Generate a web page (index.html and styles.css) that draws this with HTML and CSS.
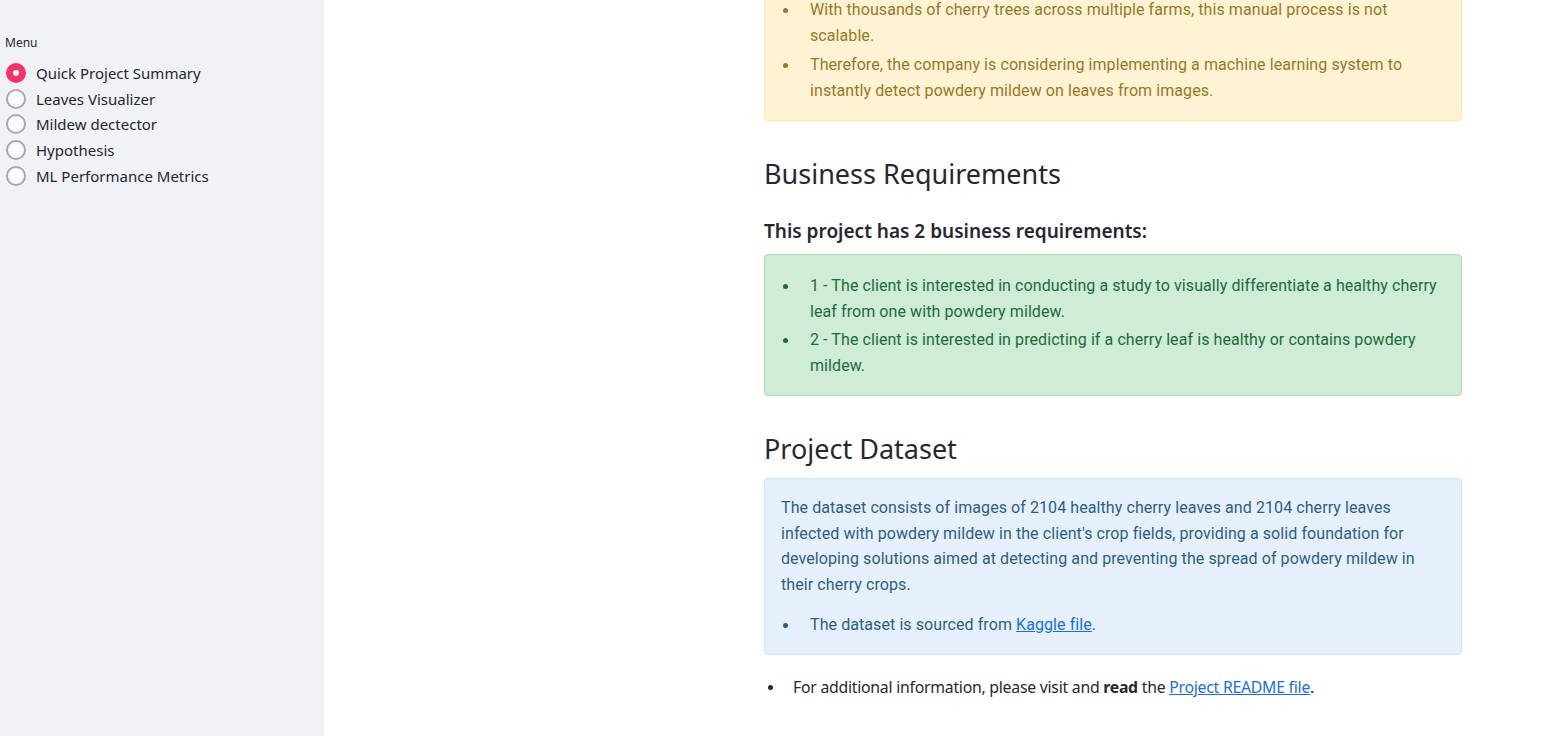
FILE: index.html
```html
<!DOCTYPE html>
<html lang="en">
<head>
<meta charset="utf-8">
<title>Quick Project Summary</title>
<link rel="stylesheet" href="styles.css">
</head>
<body>
<div class="app">
  <aside class="sidebar">
    <div class="menu-label">Menu</div>
    <div class="radio-group">
      <label class="radio selected"><span class="dot"></span><span class="radio-text">Quick Project Summary</span></label>
      <label class="radio"><span class="dot"></span><span class="radio-text">Leaves Visualizer</span></label>
      <label class="radio"><span class="dot"></span><span class="radio-text">Mildew dectector</span></label>
      <label class="radio"><span class="dot"></span><span class="radio-text">Hypothesis</span></label>
      <label class="radio"><span class="dot"></span><span class="radio-text">ML Performance Metrics</span></label>
    </div>
  </aside>
  <main class="main">
    <div class="content">
      <div class="alert warning cut">
        <ul class="bullets">
          <li>With thousands of cherry trees across multiple farms, this manual process is not scalable.</li>
          <li>Therefore, the company is considering implementing a machine learning system to instantly detect powdery mildew on leaves from images.</li>
        </ul>
      </div>
      <h2 class="heading first">Business Requirements</h2>
      <p class="lead">This project has 2 business requirements:</p>
      <div class="alert success">
        <ul class="bullets">
          <li>1 - The client is interested in conducting a study to visually differentiate a healthy cherry leaf from one with powdery mildew.</li>
          <li>2 - The client is interested in predicting if a cherry leaf is healthy or contains powdery mildew.</li>
        </ul>
      </div>
      <h2 class="heading second">Project Dataset</h2>
      <div class="alert info">
        <p>The dataset consists of images of 2104 healthy cherry leaves and 2104 cherry leaves infected with powdery mildew in the client's crop fields, providing a solid foundation for developing solutions aimed at detecting and preventing the spread of powdery mildew in their cherry crops.</p>
        <ul class="bullets">
          <li>The dataset is sourced from <a href="#">Kaggle file</a>.</li>
        </ul>
      </div>
      <ul class="bullets plain-list">
        <li>For additional information, please visit and <strong>read</strong> the <a href="#">Project README file</a>.</li>
      </ul>
    </div>
  </main>
</div>
</body>
</html>
```
FILE: styles.css
```css
html, body {
  margin: 0;
  padding: 0;
  height: 100%;
  overflow: hidden;
  background: #ffffff;
  font-family: "Noto Sans", "Open Sans", sans-serif;
  color: #262730;
}

.app {
  display: flex;
  height: 736px;
}

.sidebar {
  width: 324px;
  flex: 0 0 324px;
  background: #f0f2f6;
  padding: 35px 0 0 5px;
  box-sizing: border-box;
}

.menu-label {
  font-size: 12px;
  line-height: 16px;
  color: #262730;
  margin-bottom: 9px;
}

.radio-group {
  display: flex;
  flex-direction: column;
  margin-left: 1px;
}

.radio {
  display: flex;
  align-items: center;
  height: 25.75px;
  font-size: 15px;
  color: #262730;
}

.dot {
  width: 16px;
  height: 16px;
  border-radius: 50%;
  border: 2px solid #a3a8b4;
  background: #fbfbfd;
  margin-right: 10px;
  flex: 0 0 auto;
  position: relative;
}

.radio.selected .dot {
  border-color: #f63366;
  background: #f63366;
}

.radio.selected .dot::after {
  content: "";
  position: absolute;
  left: 5px;
  top: 5px;
  width: 6px;
  height: 6px;
  border-radius: 50%;
  background: #ffffff;
}

.main {
  flex: 1;
  padding-left: 440px;
}

.content {
  width: 698px;
  display: flex;
  flex-direction: column;
}

.bullets {
  list-style: none;
  margin: 0;
  padding-left: 29px;
}

.bullets li {
  position: relative;
}

.bullets li::before {
  content: "";
  position: absolute;
  left: -28px;
  top: 11px;
  width: 5px;
  height: 5px;
  border-radius: 50%;
  background: currentColor;
}

.alert {
  border: 1px solid;
  border-radius: 4px;
  padding: 16px;
  font-family: "Roboto", "Noto Sans", sans-serif;
  font-size: 16px;
  line-height: 26px;
  letter-spacing: 0.08px;
}

.alert .bullets li::before {
  left: -27px;
}

.alert p {
  margin: 0 0 15px 0;
  line-height: 25.5px;
}

.warning {
  background: #fff3d3;
  border-color: #ffe8a8;
  color: #96782a;
}

.warning li + li {
  margin-top: 3px;
}

.warning.cut {
  border-top: none;
  border-top-left-radius: 0;
  border-top-right-radius: 0;
  padding-top: 0;
}

.warning.cut .bullets {
  margin-top: -3px;
}

.success {
  background: #cfecd7;
  border-color: #a9dbb7;
  color: #1c6b3a;
  padding-top: 18px;
}

.success li + li {
  margin-top: 2px;
}

.info {
  background: #e6f0fb;
  border-color: #d0e3f6;
  color: #2c5f86;
}

.info a {
  color: #1a6ed8;
}

.heading {
  font-size: 27px;
  font-weight: 400;
  line-height: 34px;
  margin: 0;
  color: #262730;
}

.heading.first {
  margin-top: 36px;
}

.heading.second {
  margin-top: 36px;
  margin-bottom: 12px;
}

.lead {
  font-size: 19px;
  font-weight: 600;
  line-height: 24px;
  margin: 28px 0 11px 0;
  color: #262730;
}

.plain-list {
  margin-top: 19px;
  padding-left: 29px;
  font-size: 15.8px;
  letter-spacing: -0.25px;
  line-height: 26px;
  color: #262730;
}

.plain-list li::before {
  left: -25px;
  top: 11px;
  width: 5px;
  height: 5px;
}

.plain-list a {
  color: #1a6ed8;
}

.plain-list strong {
  font-weight: 700;
}
```
